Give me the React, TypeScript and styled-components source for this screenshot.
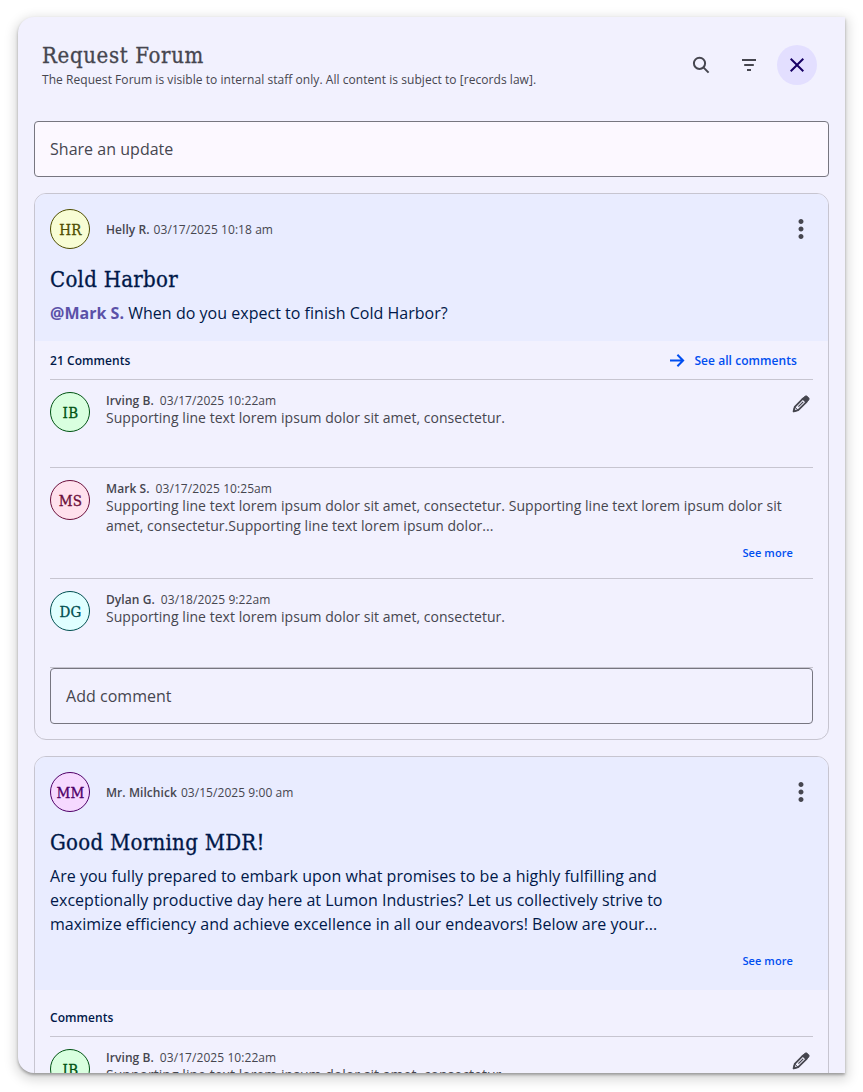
import React from 'react';
import styled, { createGlobalStyle, css } from 'styled-components';
import { MdClose, MdMoreVert } from 'react-icons/md';

const GlobalStyle = createGlobalStyle`
  * { box-sizing: border-box; }
  body {
    margin: 0;
    background: #fff;
    font-family: 'Open Sans', 'Noto Sans', sans-serif;
    color: #46464f;
  }
  h1, h2, h3, p { margin: 0; }
  button { font: inherit; letter-spacing: inherit; border: 0; background: none; padding: 0; color: inherit; }
`;

const serif = `'DejaVu Serif Condensed', 'DejaVu Serif', serif`;

const headline = css`
  font: 400 22px/32px ${serif};
  font-stretch: condensed;
  -webkit-text-stroke: 0.3px currentColor;
`;

const Page = styled.div`
  height: 1092px;
  padding: 17px 18px 19px;
  overflow: hidden;
`;

const Panel = styled.main`
  height: 1056px;
  padding: 0 16px;
  overflow: hidden;
  background: #f2f1fe;
  border-radius: 16px 0 0 16px;
  box-shadow: 0 2px 3px rgba(0, 0, 0, 0.3), 0 4px 12px 3px rgba(0, 0, 0, 0.15);
`;

const Header = styled.header`
  display: flex;
  justify-content: space-between;
  height: 104px;
  padding: 23px 12px 0 8px;
`;

const ForumTitle = styled.h1`
  ${headline}
  letter-spacing: 0.65px;
`;

const ForumNote = styled.p`
  font-size: 12px;
  line-height: 16px;
  letter-spacing: 0.05px;
`;

const Actions = styled.div`
  display: flex;
  gap: 8px;
  padding-top: 5px;
`;

const IconButton = styled.button<{ $active?: boolean }>`
  display: grid;
  place-items: center;
  width: 40px;
  height: 40px;
  border-radius: 50%;
  color: ${(p) => (p.$active ? '#170065' : '#46464f')};
  background: ${(p) => (p.$active ? '#e3dfff' : 'transparent')};
`;

const Field = styled.div<{ $filled?: boolean }>`
  display: flex;
  align-items: center;
  height: 56px;
  padding: 0 15px;
  border: 1px solid #777680;
  border-radius: 4px;
  background: ${(p) => (p.$filled ? '#fcf8ff' : 'transparent')};
  font-size: 16px;
  letter-spacing: 0.025px;
`;

const Card = styled.article`
  margin-top: 16px;
  overflow: hidden;
  border: 1px solid #c7c5d0;
  border-radius: 12px;
`;

const Post = styled.section<{ $height: number }>`
  height: ${(p) => p.$height}px;
  padding: 15px;
  background: #e9ecff;
  color: #001849;
`;

const Byline = styled.div`
  display: flex;
  align-items: center;
  height: 40px;
  color: #46464f;
  font-size: 12px;
  letter-spacing: 0.06px;
`;

const Avatar = styled.span<{ $ink: string; $fill: string }>`
  display: grid;
  flex: none;
  place-items: center;
  width: 40px;
  height: 40px;
  margin-right: 16px;
  padding: 1px 0 0 1px;
  border: 1px solid ${(p) => p.$ink};
  border-radius: 50%;
  background: ${(p) => p.$fill};
  color: ${(p) => p.$ink};
  font: 400 15px/24px ${serif};
  font-stretch: condensed;
  letter-spacing: 0.3px;
  -webkit-text-stroke: 0.3px currentColor;
`;

const Name = styled.b<{ $gap: number }>`
  margin-right: ${(p) => p.$gap}px;
  font-weight: 600;
`;

const MenuButton = styled.button`
  display: flex;
  margin: 0 -3px 0 auto;
`;

const PostTitle = styled.h2`
  margin-top: 15px;
  ${headline}
  letter-spacing: 0.28px;
`;

const PostText = styled.p`
  max-width: 640px;
  margin-top: 5px;
  font-size: 16px;
  line-height: 24px;
  letter-spacing: 0.025px;
`;

const Mention = styled.b`
  color: #5b51a8;
  font-weight: 700;
`;

const Thread = styled.section`
  padding: 0 15px 15px;
`;

const ThreadHeader = styled.div<{ $height: number; $top: number }>`
  display: flex;
  align-items: flex-start;
  justify-content: space-between;
  height: ${(p) => p.$height}px;
  padding: ${(p) => p.$top}px 16px 0 0;
  border-bottom: 1px solid #c7c5d0;
  color: #001849;
  font-size: 12px;
  font-weight: 600;
  line-height: 16px;
  letter-spacing: 0.06px;
`;

const LinkButton = styled.button`
  display: flex;
  align-items: center;
  gap: 9px;
  color: #004ef0;
`;

const SeeMore = styled.button<{ $top: number; $right: number }>`
  display: block;
  margin: ${(p) => p.$top}px ${(p) => p.$right}px 0 auto;
  color: #004ef0;
  font-size: 11px;
  font-weight: 600;
  line-height: 16px;
  letter-spacing: 0.08px;
`;

const Comment = styled.div<{ $height: number }>`
  display: flex;
  height: ${(p) => p.$height}px;
  padding-top: 12px;
  border-bottom: 1px solid #c7c5d0;
`;

const CommentBody = styled.div`
  flex: 1;
  min-width: 0;
  padding-top: 1px;
`;

const CommentMeta = styled.div`
  font-size: 12px;
  line-height: 16px;
  letter-spacing: 0.07px;
`;

const CommentText = styled.p`
  width: 690px;
  margin-top: -1px;
  font-size: 14px;
  line-height: 20px;
  letter-spacing: 0.038px;
`;

const EditButton = styled.button`
  align-self: flex-start;
  display: flex;
  margin: 3px 3px 0 0;
`;

const SearchIcon = () => (
  <svg width="18" height="18" viewBox="0 0 18 18" fill="none" stroke="currentColor" strokeWidth="2">
    <circle cx="7.5" cy="7.3" r="5.6" />
    <path d="M11.4 11.4L16.6 16.6" />
  </svg>
);

const FilterIcon = () => (
  <svg width="14" height="12" viewBox="0 0 14 12" fill="none" stroke="currentColor" strokeWidth="1.9">
    <path d="M0 1H14M2.2 6H11.8M5 11H9" />
  </svg>
);

const ArrowIcon = () => (
  <svg width="15" height="14" viewBox="0 0 15 14" fill="none" stroke="currentColor" strokeWidth="2">
    <path d="M0 6.5H13.5M7.4 .8L13.1 6.5L7.4 12.2" />
  </svg>
);

const PencilIcon = () => (
  <svg width="18" height="18" viewBox="0 0 18 18" fill="none" stroke="currentColor">
    <path d="M1.7 16.3L2.8 11.8L11.2 3.4L14.6 6.8L6.2 15.2Z" strokeWidth="1.8" strokeLinejoin="round" />
    <path d="M10.2 3.8L13 1.2Q14.2 .4 15.4 1.4L16.7 2.7Q17.6 3.8 16.8 5L14.2 7.8Z" fill="currentColor" strokeWidth=".8" />
    <path d="M6.4 11.6L11.2 6.8" strokeWidth="1.2" />
    <path d="M2.8 12L6 15.2" strokeWidth="1" />
    <path d="M1 17L1.8 13.6L4.4 16.2Z" fill="currentColor" strokeWidth=".4" />
  </svg>
);

type Person = { name: string; initials: string; ink: string; fill: string };

const helly: Person = { name: 'Helly R.', initials: 'HR', ink: '#4e4d00', fill: '#f8fdd4' };
const irving: Person = { name: 'Irving B.', initials: 'IB', ink: '#005313', fill: '#d9ffdf' };
const mark: Person = { name: 'Mark S.', initials: 'MS', ink: '#6b0f3b', fill: '#ffe1ed' };
const dylan: Person = { name: 'Dylan G.', initials: 'DG', ink: '#004f50', fill: '#e0ffff' };
const milchick: Person = { name: 'Mr. Milchick', initials: 'MM', ink: '#4f0068', fill: '#f6d9ff' };

const Badge = ({ person }: { person: Person }) => (
  <Avatar $ink={person.ink} $fill={person.fill}>{person.initials}</Avatar>
);

const PostByline = ({ person, date }: { person: Person; date: string }) => (
  <Byline>
    <Badge person={person} />
    <Name $gap={4}>{person.name}</Name>
    <span>{date}</span>
    <MenuButton aria-label="More options"><MdMoreVert size={30} /></MenuButton>
  </Byline>
);

type CommentProps = {
  person: Person;
  date: string;
  height: number;
  children: React.ReactNode;
  editable?: boolean;
  more?: boolean;
};

const CommentRow = ({ person, date, height, children, editable, more }: CommentProps) => (
  <Comment $height={height}>
    <Badge person={person} />
    <CommentBody>
      <CommentMeta><Name $gap={6}>{person.name}</Name>{date}</CommentMeta>
      <CommentText>{children}</CommentText>
      {more && <SeeMore $top={9} $right={20}>See more</SeeMore>}
    </CommentBody>
    {editable && <EditButton aria-label="Edit comment"><PencilIcon /></EditButton>}
  </Comment>
);

export default function App() {
  return (
    <>
      <GlobalStyle />
      <Page>
        <Panel>
          <Header>
            <div>
              <ForumTitle>Request Forum</ForumTitle>
              <ForumNote>
                The Request Forum is visible to internal staff only. All content is subject to [records law].
              </ForumNote>
            </div>
            <Actions>
              <IconButton aria-label="Search"><SearchIcon /></IconButton>
              <IconButton aria-label="Filter"><FilterIcon /></IconButton>
              <IconButton aria-label="Close" $active><MdClose size={24} /></IconButton>
            </Actions>
          </Header>
          <Field $filled>Share an update</Field>

          <Card>
            <Post $height={147}>
              <PostByline person={helly} date="03/17/2025 10:18 am" />
              <PostTitle>Cold Harbor</PostTitle>
              <PostText><Mention>@Mark S.</Mention> When do you expect to finish Cold Harbor?</PostText>
            </Post>
            <Thread>
              <ThreadHeader $height={39} $top={12}>
                <span>21 Comments</span>
                <LinkButton><ArrowIcon />See all comments</LinkButton>
              </ThreadHeader>
              <CommentRow person={irving} date="03/17/2025 10:22am" height={88} editable>
                Supporting line text lorem ipsum dolor sit amet, consectetur.
              </CommentRow>
              <CommentRow person={mark} date="03/17/2025 10:25am" height={111} more>
                Supporting line text lorem ipsum dolor sit amet, consectetur. Supporting line text lorem ipsum
                dolor sit amet, consectetur.Supporting line text lorem ipsum dolor...
              </CommentRow>
              <CommentRow person={dylan} date="03/18/2025 9:22am" height={89}>
                Supporting line text lorem ipsum dolor sit amet, consectetur.
              </CommentRow>
              <Field>Add comment</Field>
            </Thread>
          </Card>

          <Card>
            <Post $height={233}>
              <PostByline person={milchick} date="03/15/2025 9:00 am" />
              <PostTitle>Good Morning MDR!</PostTitle>
              <PostText>
                Are you fully prepared to embark upon what promises to be a highly fulfilling and exceptionally
                productive day here at Lumon Industries? Let us collectively strive to maximize efficiency and
                achieve excellence in all our endeavors! Below are your...
              </PostText>
              <SeeMore $top={17} $right={20}>See more</SeeMore>
            </Post>
            <Thread>
              <ThreadHeader $height={47} $top={20}>
                <span>Comments</span>
              </ThreadHeader>
              <CommentRow person={irving} date="03/17/2025 10:22am" height={88} editable>
                Supporting line text lorem ipsum dolor sit amet, consectetur.
              </CommentRow>
            </Thread>
          </Card>
        </Panel>
      </Page>
    </>
  );
}
